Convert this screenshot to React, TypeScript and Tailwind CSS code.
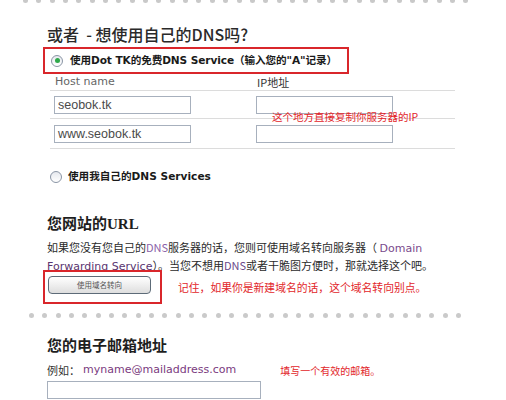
import React from "react";

const Dots = ({ count, top }: { count: number; top?: boolean }) => (
  <div className={top ? "flex h-[3px] overflow-hidden gap-[8.35px] pl-[23px]" : "flex h-[5px] gap-[8.35px] pl-[29px]"}>
    {Array.from({ length: count }).map((_, i) => (
      <div
        key={i}
        className={
          top
            ? "w-[5px] h-[5px] shrink-0 rounded-full bg-[#c9c9c9] -mt-[2.5px]"
            : "w-[5px] h-[5px] shrink-0 rounded-full bg-[#cacaca]"
        }
      />
    ))}
  </div>
);

const Radio = ({ checked }: { checked?: boolean }) => (
  <div className="w-[12px] h-[12px] shrink-0 rounded-full border border-[#8a95a5] bg-gradient-to-b from-[#e6e9ee] to-white flex items-center justify-center">
    {checked && <div className="w-[5px] h-[5px] rounded-full bg-[#2fa84a]" />}
  </div>
);

const Input = ({ value, w }: { value?: string; w: string }) => (
  <div className={`${w} h-[18px] border border-[#a7b0bd] bg-white flex items-center pl-[3px] font-['Liberation_Sans','Noto_Sans_CJK_SC',sans-serif] text-[12.5px] text-[#4a4a4a]`}>
    {value}
  </div>
);

export default function App() {
  const verdana = "font-['DejaVu_Sans','Noto_Sans_CJK_SC',sans-serif]";
  const cjk = "font-['Noto_Sans_CJK_SC',sans-serif]";
  return (
    <div className="w-[506px] h-[400px] bg-white overflow-hidden relative text-[#222]">
      <Dots count={34} top />

      {/* heading 1 */}
      <div className={`ml-[47px] mt-[21px] h-[20px] leading-[20px] text-[16px] font-medium text-[#2a2a2a] whitespace-pre ${cjk}`}>
        {"或者  - 想使用自己的DNS吗?"}
      </div>

      {/* red box option 1 */}
      <div className="ml-[43px] mt-[3px] w-[306px] h-[27px] border-2 border-[#d9262b] flex items-center pl-[6px] gap-[7px]">
        <Radio checked />
        <span className={`${verdana} text-[10.6px] font-bold text-[#1a1a1a] whitespace-nowrap tracking-[-0.1px]`}>
          使用Dot TK的免费DNS Service（输入您的"A"记录）
        </span>
      </div>

      {/* table */}
      <div className="ml-[50px] w-[405px] relative">
        <div className="flex h-[17px] items-center border-b border-[#dcdcdc] pl-[5px]">
          <span className={`w-[202px] ${verdana} text-[11px] text-[#666]`}>Host name</span>
          <span className={`${cjk} text-[11px] text-[#333]`}>IP地址</span>
        </div>
        <div className="flex h-[28px] items-center border-b border-[#dcdcdc] pl-[4px] pt-[1px]">
          <Input value="seobok.tk" w="w-[137px]" />
          <div className="w-[65px]" />
          <Input w="w-[137px]" />
        </div>
        <div className="flex h-[30px] items-center border-b border-[#dcdcdc] pl-[4px] pt-[1px]">
          <Input value="www.seobok.tk" w="w-[137px]" />
          <div className="w-[65px]" />
          <Input w="w-[137px]" />
        </div>
        <div className={`absolute left-[222px] top-[37px] ${cjk} text-[10.5px] leading-[12px] text-[#e2262a] whitespace-nowrap`}>
          这个地方直接复制你服务器的IP
        </div>
      </div>

      {/* radio 2 */}
      <div className="ml-[50px] mt-[21px] flex items-center gap-[6px] h-[14px]">
        <Radio />
        <span className={`${verdana} text-[10.6px] font-bold text-[#1a1a1a] whitespace-nowrap`}>使用我自己的DNS Services</span>
      </div>

      {/* URL heading */}
      <div className="ml-[47px] mt-[30px] h-[20px] leading-[20px] text-[15px] font-bold text-[#1e1e1e] font-['Liberation_Serif','Noto_Sans_CJK_SC',serif]">
        您网站的URL
      </div>

      <div className={`ml-[47px] mt-[4px] ${cjk} text-[11px] text-[#2a2a2a] whitespace-nowrap`}>
        <div className="h-[18px] leading-[18px]">
          如果您没有您自己的<span className="text-[#8a62a8]">DNS</span>服务器的话，您则可使用域名转向服务器（ <span className={`${verdana} text-[#7a4a8c] leading-[18px]`}>Domain</span>
        </div>
        <div className="h-[18px] leading-[18px]">
          <span className={`${verdana} text-[#5a3570] underline leading-[18px]`}>Forwarding Service</span>）。当您不想用<span className="text-[#6a4a8a]">DNS</span>或者干脆图方便时，那就选择这个吧。
        </div>
      </div>

      {/* button row */}
      <div className="ml-[43px] mt-[-4px] flex items-center">
        <div className="w-[119px] h-[34px] border-2 border-[#d9262b] pl-[3px] pt-[4px]">
          <div className={`w-[103px] h-[18px] rounded-[4px] border border-[#5d6b78] bg-gradient-to-b from-white to-[#dedede] flex items-center justify-center ${cjk} text-[7.5px] text-[#555]`}>
            使用域名转向
          </div>
        </div>
        <div className={`ml-[16px] ${cjk} text-[10.8px] text-[#e2262a] whitespace-nowrap`}>
          记住，如果你是新建域名的话，这个域名转向别点。
        </div>
      </div>

      <div className="mt-[9px]">
        <Dots count={33} />
      </div>

      {/* email heading */}
      <div className="ml-[47px] mt-[18px] h-[20px] leading-[20px] text-[15px] font-bold text-[#1e1e1e] font-['Liberation_Serif','Noto_Sans_CJK_SC',serif]">
        您的电子邮箱地址
      </div>

      <div className="ml-[47px] mt-[6px] flex items-center h-[16px] whitespace-nowrap">
        <span className={`${cjk} text-[11px] text-[#333] w-[36px]`}>例如：</span>
        <span className={`${verdana} text-[11px] text-[#7a3a7e]`}>myname@mailaddress.com</span>
        <span className={`ml-[44px] ${cjk} text-[10px] text-[#e2262a]`}>填写一个有效的邮箱。</span>
      </div>

      <div className="ml-[47px] mt-[3px] w-[214px] h-[18px] border border-[#a7b0bd] bg-white" />
    </div>
  );
}
